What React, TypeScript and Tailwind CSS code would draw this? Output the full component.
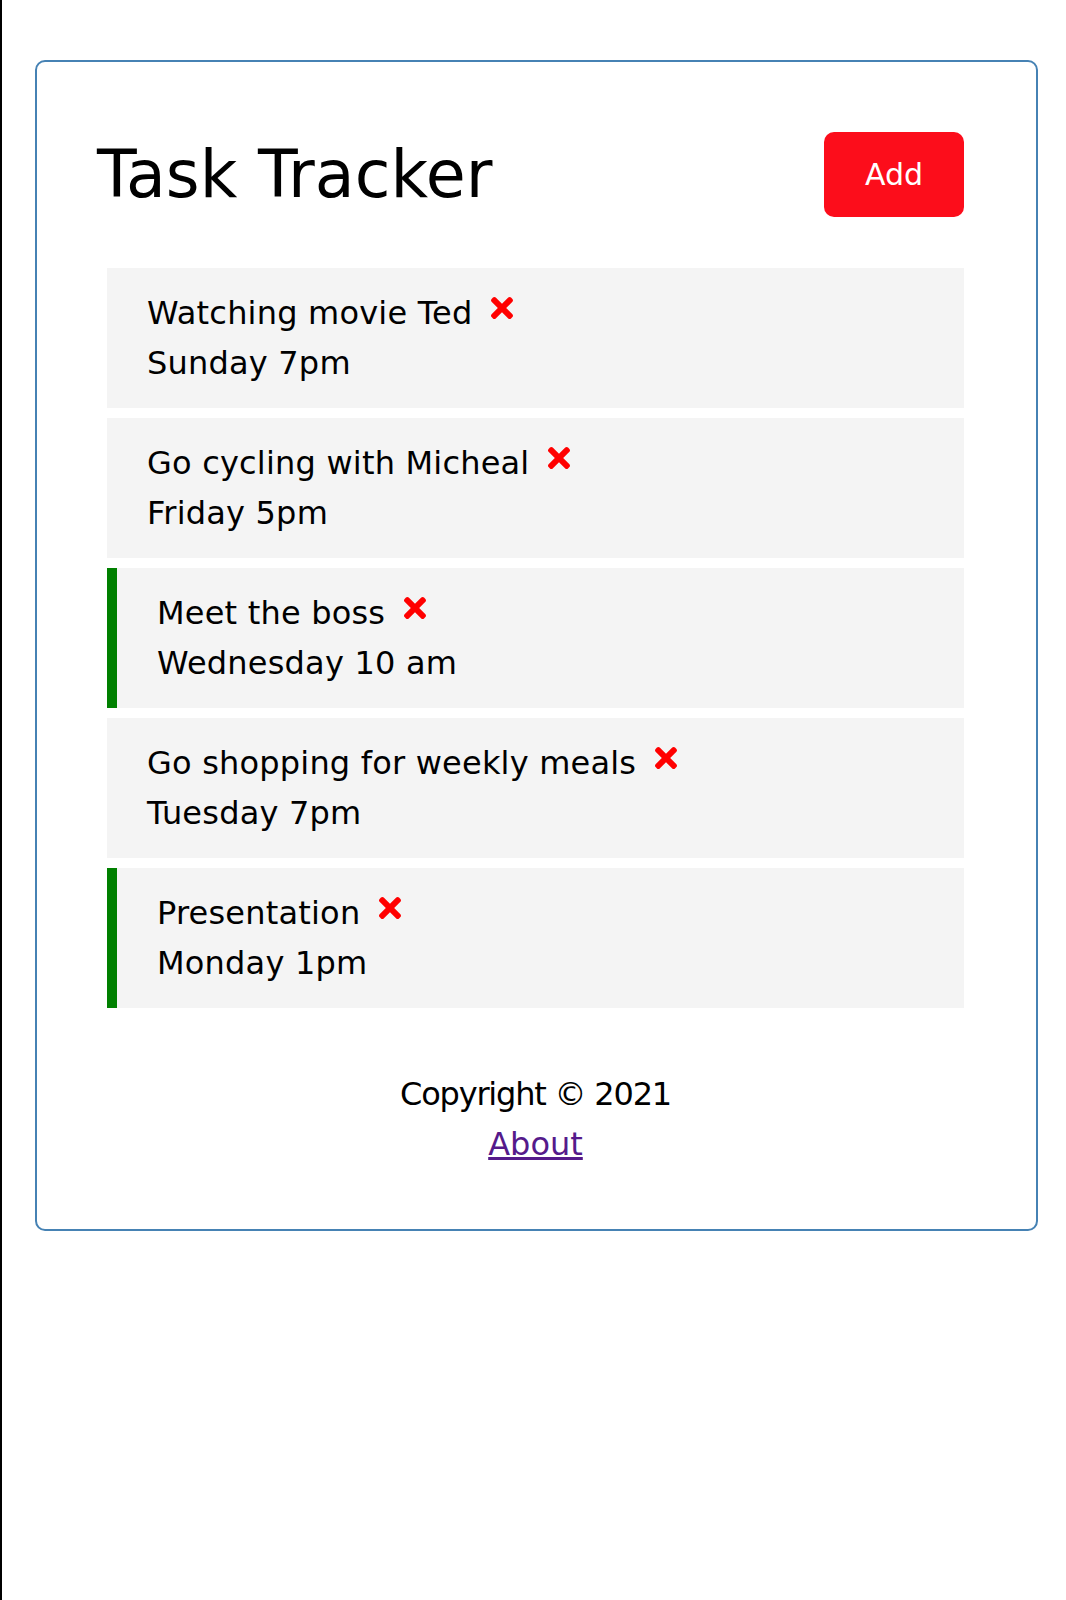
import React from 'react';
import { FaTimes } from 'react-icons/fa';

interface Task {
  id: number;
  text: string;
  day: string;
  reminder: boolean;
}

const tasks: Task[] = [
  { id: 1, text: 'Watching movie Ted', day: 'Sunday 7pm', reminder: false },
  { id: 2, text: 'Go cycling with Micheal', day: 'Friday 5pm', reminder: false },
  { id: 3, text: 'Meet the boss', day: 'Wednesday 10 am', reminder: true },
  { id: 4, text: 'Go shopping for weekly meals', day: 'Tuesday 7pm', reminder: false },
  { id: 5, text: 'Presentation', day: 'Monday 1pm', reminder: true },
];

const TaskItem: React.FC<{ task: Task }> = ({ task }) => (
  <div
    className={`m-[10px] bg-[#f4f4f4] px-[40px] py-[20px] tracking-[0.2px] ${
      task.reminder ? 'border-l-[10px] border-[#008000]' : ''
    }`}
  >
    <h3 className="text-[32px] font-normal leading-[50px]">
      {task.text}
      <FaTimes className="ml-[14px] inline cursor-pointer align-baseline text-[#ff0000]" />
    </h3>
    <p className="text-[32px] leading-[50px]">{task.day}</p>
  </div>
);

export default function App() {
  return (
    <div
      className="min-h-[1600px] border-l-2 border-black bg-white pt-[60px] text-black"
      style={{ fontFamily: '"DejaVu Sans", sans-serif' }}
    >
      <div className="ml-[33px] w-[1003px] rounded-[10px] border-2 border-[#4682b4] py-[60px] pl-[60px] pr-[62px]">
        <header className="mb-[41px] flex items-center justify-between">
          <h1 className="text-[65px] font-normal leading-[96px]">Task Tracker</h1>
          <button className="m-[10px] h-[85px] w-[140px] cursor-pointer rounded-[10px] bg-[#fc0d1b] text-[30px] text-white">
            Add
          </button>
        </header>
        <div>
          {tasks.map((task) => (
            <TaskItem key={task.id} task={task} />
          ))}
        </div>
        <footer className="mt-[61px] text-center text-[32px] leading-[50px]">
          <p className="tracking-[-1.2px]">Copyright © 2021</p>
          <a href="#" className="text-[#551a8b] underline">
            About
          </a>
        </footer>
      </div>
    </div>
  );
}
